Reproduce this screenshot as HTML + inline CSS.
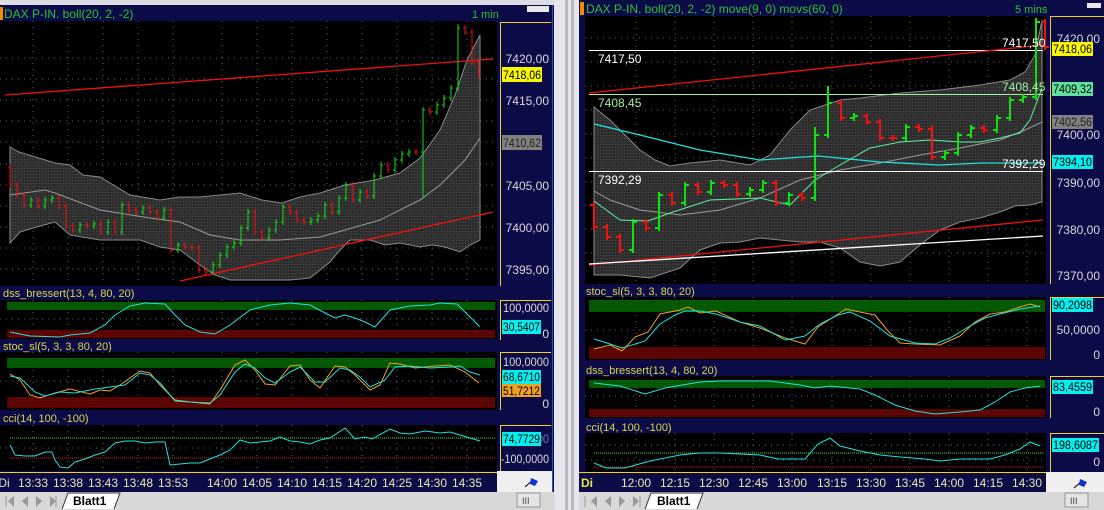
<!DOCTYPE html>
<html><head><meta charset="utf-8"><style>
html,body{margin:0;padding:0;background:#d4d0c8;width:1104px;height:510px;overflow:hidden}
svg{display:block}
text{font-family:"Liberation Sans",sans-serif}
</style></head><body>
<svg id="s" width="1104" height="510" viewBox="0 0 1104 510" xmlns="http://www.w3.org/2000/svg">
<defs>
<pattern id="dots" width="3" height="3" patternUnits="userSpaceOnUse"><rect width="3" height="3" fill="#2e2e2e"/><rect width="1" height="1" fill="#4a4a4a"/></pattern>
<pattern id="gb" width="2" height="2" patternUnits="userSpaceOnUse"><rect width="2" height="2" fill="#005400"/><rect width="1" height="1" fill="#0a6a0a"/></pattern>
<pattern id="rb" width="2" height="2" patternUnits="userSpaceOnUse"><rect width="2" height="2" fill="#560000"/><rect width="1" height="1" fill="#6a1010"/></pattern>
</defs>
<rect x="0" y="0" width="1104" height="510" fill="#e8e8ec"/>
<rect x="0" y="0" width="555" height="5" fill="#dcdce4"/>
<!-- LEFT PANEL -->
<rect x="0" y="5" width="554" height="487" fill="#0b0b48"/>
<rect x="0" y="21" width="497" height="265" fill="#000"/>
<rect x="0" y="300" width="497" height="39" fill="#000"/>
<rect x="0" y="352" width="497" height="58" fill="#000"/>
<rect x="0" y="425" width="497" height="46" fill="#000"/>
<rect x="0" y="7" width="3" height="13" fill="#f08c00"/>
<text x="4" y="18" font-size="12" fill="#30c030">DAX P-IN. boll(20, 2, -2)</text>
<text x="472" y="18" font-size="11" fill="#30c030">1 min</text>
<rect x="527" y="6" width="22" height="6" fill="#e8e8e8"/>
<path d="M500.5 286V22.5H551" stroke="#f0d020" fill="none"/>
<path d="M500.5 340V300.5H551" stroke="#f0d020" fill="none"/>
<path d="M500.5 410V352.5H551" stroke="#f0d020" fill="none"/>
<path d="M500.5 471V425.5H551" stroke="#f0d020" fill="none"/>
<path d="M552.5 5V492" stroke="#3050c0"/>
<g stroke="#666" stroke-dasharray="1,5">
<path d="M33 21V285M68 21V285M103 21V285M138 21V285M173 21V285M222 21V285M257 21V285M292 21V285M327 21V285M362 21V285M397 21V285M432 21V285M467 21V285"/>
<path d="M0 58H497M0 100H497M0 142H497M0 185H497M0 227H497M0 269H497M0 79H497M0 121H497M0 164H497M0 206H497M0 248H497"/>
<path d="M33 300V338M68 300V338M103 300V338M138 300V338M173 300V338M222 300V338M257 300V338M292 300V338M327 300V338M362 300V338M397 300V338M432 300V338M467 300V338M0 319H497"/>
<path d="M33 352V410M68 352V410M103 352V410M138 352V410M173 352V410M222 352V410M257 352V410M292 352V410M327 352V410M362 352V410M397 352V410M432 352V410M467 352V410M0 381H497"/>
<path d="M33 425V470M68 425V470M103 425V470M138 425V470M173 425V470M222 425V470M257 425V470M292 425V470M327 425V470M362 425V470M397 425V470M432 425V470M467 425V470M0 448H497"/>
</g>
<polygon fill="url(#dots)" stroke="#888" stroke-width="1" points="10,147 19,152 55,163 70,165 83,175 100,177 130,195 160,200 180,197 200,197 240,193 262,200 282,203 300,197 320,193 345,185 375,180 400,173 420,158 440,130 455,95 467,60 480,35 480,240 470,245 460,252 445,247 432,245 420,247 400,243 385,245 370,240 350,240 340,250 330,262 310,278 290,280 260,280 230,280 215,275 200,265 180,250 160,247 140,240 100,240 70,235 55,222 40,226 20,232 10,243"/>
<polyline fill="none" stroke="#999" points="10,195 45,190 55,193 100,210 150,218 180,222 210,235 240,240 280,240 320,237 345,230 380,220 420,200 440,185 465,160 480,138"/>
<path d="M5 95L493 59M180 281L493 212" stroke="#f01010" stroke-width="1.3"/>
<g id="lbars"></g>
<g font-size="12" fill="#d8d8d8" text-anchor="end">
<text x="549" y="63">7420,00</text><text x="549" y="105">7415,00</text><text x="549" y="190">7405,00</text><text x="549" y="232">7400,00</text><text x="549" y="274">7395,00</text>
</g>
<rect x="502" y="67" width="40" height="15" fill="#f8f800"/><text x="503" y="79" font-size="12" fill="#000" textLength="38" lengthAdjust="spacingAndGlyphs">7418,06</text>
<rect x="502" y="135" width="40" height="15" fill="#808080"/><text x="503" y="147" font-size="12" fill="#202020" textLength="38" lengthAdjust="spacingAndGlyphs">7410,62</text>
<!-- left dss -->
<text x="3" y="297" font-size="11" fill="#d8d848">dss_bressert(13, 4, 80, 20)</text>
<rect x="7" y="302" width="488" height="8" fill="url(#gb)"/>
<rect x="7" y="330" width="488" height="8" fill="url(#rb)"/>
<polyline fill="none" stroke="#20e0e0" points="10,332 30,336 60,337 70,335 90,333 105,325 115,315 130,306 145,303 165,304 175,315 185,325 200,332 215,334 230,325 250,310 270,305 290,303 310,305 325,313 335,318 345,315 355,318 365,322 375,327 390,310 410,306 430,305 440,303 457,304 470,317 480,327"/>
<text x="549" y="312" font-size="12" fill="#d8d8d8" text-anchor="end" textLength="46" lengthAdjust="spacingAndGlyphs">100,0000</text>
<text x="549" y="338" font-size="12" fill="#d8d8d8" text-anchor="end">0</text>
<rect x="502" y="320" width="39" height="14" fill="#00f0f0"/><text x="503" y="331" font-size="12" fill="#000" textLength="37" lengthAdjust="spacingAndGlyphs">30,5407</text>
<!-- left stoc -->
<text x="3" y="350" font-size="11" fill="#d8d848">stoc_sl(5, 3, 3, 80, 20)</text>
<rect x="7" y="358" width="488" height="10" fill="url(#gb)"/>
<rect x="7" y="397" width="488" height="11" fill="url(#rb)"/>
<polyline fill="none" stroke="#f0a020" points="10,374 20,380 30,395 40,398 55,393 70,389 90,394 100,390 110,391 120,385 140,371 150,373 160,385 175,400 190,402 210,404 220,390 235,365 245,360 255,370 265,384 275,385 290,366 300,365 310,380 320,388 335,366 345,367 355,375 370,390 380,385 390,363 400,364 415,368 435,366 450,365 465,372 479,383"/>
<polyline fill="none" stroke="#20e0e0" points="10,376 20,378 35,392 45,396 60,392 75,393 95,389 110,387 125,385 140,373 150,375 160,383 175,401 190,402 210,403 220,395 235,372 245,364 255,368 265,378 275,383 290,372 300,367 315,382 325,382 340,368 350,370 360,377 370,387 385,380 395,367 410,366 430,368 450,367 460,366 470,372 480,375"/>
<text x="549" y="366" font-size="12" fill="#d8d8d8" text-anchor="end" textLength="46" lengthAdjust="spacingAndGlyphs">100,0000</text>
<text x="549" y="408" font-size="12" fill="#d8d8d8" text-anchor="end">0</text>
<rect x="502" y="384" width="39" height="13" fill="#f0a020"/><text x="503" y="395" font-size="12" fill="#000" textLength="37" lengthAdjust="spacingAndGlyphs">51,7212</text>
<rect x="502" y="370" width="39" height="14" fill="#00f0f0"/><text x="503" y="381" font-size="12" fill="#000" textLength="37" lengthAdjust="spacingAndGlyphs">68,6710</text>
<!-- left cci -->
<text x="3" y="422" font-size="11" fill="#d8d848">cci(14, 100, -100)</text>
<path d="M10 438H495" stroke="#40e040" stroke-dasharray="1,1"/>
<path d="M10 458H495" stroke="#e02020" stroke-dasharray="1,1"/>
<polyline fill="none" stroke="#20e0e0" points="10,445 15,455 25,456 35,456 45,452 52,452 55,460 60,467 68,468 75,462 85,459 95,455 105,452 115,443 125,441 135,441 145,443 155,442 165,442 170,465 180,464 190,463 200,463 210,459 220,455 230,450 240,440 250,443 260,442 270,441 280,437 290,441 300,442 310,444 320,440 330,438 345,428 355,439 365,437 372,439 390,429 400,433 410,434 425,431 440,433 450,432 460,435 470,438 480,441"/>
<text x="549" y="443" font-size="12" fill="#d8d8d8" text-anchor="end" opacity="0.5" textLength="46" lengthAdjust="spacingAndGlyphs">100,0000</text>
<rect x="502" y="432" width="39" height="14" fill="#00f0f0"/><text x="503" y="443" font-size="12" fill="#000" textLength="37" lengthAdjust="spacingAndGlyphs">74,7729</text>
<text x="549" y="463" font-size="12" fill="#d8d8d8" text-anchor="end" textLength="48" lengthAdjust="spacingAndGlyphs">-100,0000</text>
<!-- left time axis -->
<rect x="0" y="472" width="497" height="20" fill="#0b0b48"/>
<path d="M0 472.5H497" stroke="#f0d020"/>
<g font-size="12" fill="#e8e8b0" text-anchor="middle">
<text x="4" y="487">Di</text><text x="33" y="487">13:33</text><text x="68" y="487">13:38</text><text x="103" y="487">13:43</text><text x="138" y="487">13:48</text><text x="173" y="487">13:53</text><text x="222" y="487">14:00</text><text x="257" y="487">14:05</text><text x="292" y="487">14:10</text><text x="327" y="487">14:15</text><text x="362" y="487">14:20</text><text x="397" y="487">14:25</text><text x="432" y="487">14:30</text><text x="467" y="487">14:35</text>
</g>
<rect x="497" y="471" width="55" height="21" fill="#f0f0f0"/>
<path d="M525 487L533 480" stroke="#000"/><path d="M531 478L538 481L535 486L530 484Z" fill="#1030d0"/>
<rect x="0" y="492" width="555" height="18" fill="#d8d8d8"/>
<g fill="#999"><path d="M8 501L14 496V507Z M22 501L28 496V507Z M36 496V507L42 501Z M50 496V507L56 501Z"/></g>
<path d="M6 496V507M56 496V507" stroke="#999"/>
<path d="M62 509L68 493H120L114 509" fill="#fff" stroke="#333"/>
<text x="73" y="505" font-size="12" font-weight="bold" fill="#000">Blatt1</text>
<rect x="517" y="493" width="23" height="14" fill="#e4e4e4" stroke="#999"/>
<text x="522" y="504" font-size="9" fill="#444">III</text>
<!-- divider -->
<rect x="555" y="0" width="24" height="510" fill="#e6e6ec"/>
<rect x="565" y="0" width="3" height="510" fill="#b8b8c0"/>
<rect x="571" y="0" width="3" height="510" fill="#b8b8c0"/>
<!-- RIGHT PANEL -->
<rect x="579" y="0" width="525" height="492" fill="#0b0b48"/>
<rect x="585" y="16" width="461" height="268" fill="#000"/>
<rect x="585" y="297" width="461" height="63" fill="#000"/>
<rect x="585" y="376" width="461" height="42" fill="#000"/>
<rect x="585" y="433" width="461" height="39" fill="#000"/>
<rect x="580" y="2" width="4" height="13" fill="#f08c00"/>
<text x="586" y="13" font-size="12" fill="#30c030">DAX P-IN. boll(20, 2, -2) move(9, 0) movs(60, 0)</text>
<text x="1015" y="13" font-size="11" fill="#30c030">5 mins</text>
<rect x="1087" y="3" width="14" height="5" fill="#e8e8e8"/>
<path d="M1050.5 284V16.5H1104" stroke="#f0d020" fill="none"/>
<path d="M1050.5 360V297.5H1104" stroke="#f0d020" fill="none"/>
<path d="M1050.5 418V376.5H1104" stroke="#f0d020" fill="none"/>
<path d="M1050.5 472V433.5H1104" stroke="#f0d020" fill="none"/>
<g stroke="#666" stroke-dasharray="1,5">
<path d="M636 16V284M675 16V284M714 16V284M753 16V284M792 16V284M832 16V284M871 16V284M910 16V284M949 16V284M988 16V284M1027 16V284"/>
<path d="M585 38H1046M585 86H1046M585 134H1046M585 182H1046M585 229H1046M585 62H1046M585 110H1046M585 158H1046M585 205H1046M585 253H1046"/>
<path d="M636 297V360M675 297V360M714 297V360M753 297V360M792 297V360M832 297V360M871 297V360M910 297V360M949 297V360M988 297V360M1027 297V360M585 330H1046"/>
<path d="M636 376V418M675 376V418M714 376V418M753 376V418M792 376V418M832 376V418M871 376V418M910 376V418M949 376V418M988 376V418M1027 376V418M585 396H1046"/>
<path d="M636 433V472M675 433V472M714 433V472M753 433V472M792 433V472M832 433V472M871 433V472M910 433V472M949 433V472M988 433V472M1027 433V472M585 445H1046M585 460H1046"/>
</g>
<polygon fill="url(#dots)" stroke="#888" points="594,107 610,120 640,150 655,160 670,166 690,163 720,160 750,165 770,155 790,130 810,110 840,100 860,98 900,93 940,90 980,85 1010,80 1025,72 1035,55 1042,20 1042,202 1030,205 1015,206 1000,212 980,218 960,222 940,230 920,245 900,262 880,266 860,262 840,248 820,242 800,242 780,240 760,238 740,242 720,243 700,250 680,268 650,278 620,275 594,275"/>
<polyline fill="none" stroke="#999" points="594,191 610,200 640,210 680,215 720,210 760,198 800,180 840,170 880,163 920,155 960,148 1000,140 1025,130 1042,122"/>
<polyline fill="none" stroke="#20e0e0" stroke-width="1.3" points="594,124 640,135 700,150 760,160 818,156 880,162 939,165 982,163 1042,163"/>
<polyline fill="none" stroke="#60f0a0" points="594,201 620,220 648,221 670,213 710,200 760,198 790,205 815,180 840,165 870,148 900,142 930,140 960,142 980,142 1000,138 1020,133 1030,120 1042,88"/>
<path d="M589 50.5H1043M589 171.5H1043" stroke="#fff"/>
<path d="M589 94.5H1043" stroke="#a0f0a0"/>
<path d="M589 93L1043 45M589 265L1043 220" stroke="#f01010" stroke-width="1.3"/>
<path d="M589 264L1043 236" stroke="#fff" stroke-width="1.3"/>
<g id="rbars"></g>
<g font-size="12">
<text x="598" y="63" fill="#fff">7417,50</text><text x="598" y="107" fill="#a0f0a0">7408,45</text><text x="598" y="184" fill="#fff">7392,29</text>
<text x="1002" y="47" fill="#fff">7417,50</text><text x="1002" y="91" fill="#a0f0a0">7408,45</text><text x="1002" y="168" fill="#fff">7392,29</text>
</g>
<g font-size="12" fill="#d8d8d8" text-anchor="end">
<text x="1100" y="43">7420,00</text><text x="1100" y="139">7400,00</text><text x="1100" y="187">7390,00</text><text x="1100" y="234">7380,00</text><text x="1100" y="280">7370,00</text>
</g>
<rect x="1052" y="42" width="41" height="14" fill="#f8f800"/><text x="1053" y="53" font-size="12" fill="#000" textLength="39" lengthAdjust="spacingAndGlyphs">7418,06</text>
<rect x="1052" y="82" width="41" height="14" fill="#60e0a0"/><text x="1053" y="93" font-size="12" fill="#000" textLength="39" lengthAdjust="spacingAndGlyphs">7409,32</text>
<rect x="1052" y="115" width="41" height="14" fill="#808080"/><text x="1053" y="126" font-size="12" fill="#202020" textLength="39" lengthAdjust="spacingAndGlyphs">7402,56</text>
<rect x="1052" y="155" width="41" height="14" fill="#00f0f0"/><text x="1053" y="166" font-size="12" fill="#000" textLength="39" lengthAdjust="spacingAndGlyphs">7394,10</text>
<!-- right stoc -->
<text x="586" y="295" font-size="11" fill="#d8d848">stoc_sl(5, 3, 3, 80, 20)</text>
<rect x="589" y="300" width="456" height="12" fill="url(#gb)"/>
<rect x="589" y="347" width="456" height="12" fill="url(#rb)"/>
<polyline fill="none" stroke="#f0a020" points="594,349 610,345 622,351 635,337 648,332 660,314 680,310 688,307 700,313 716,311 740,322 760,328 785,338 805,344 818,327 835,316 846,309 860,312 875,315 888,331 900,343 915,344 940,345 960,336 975,322 990,314 1005,312 1020,307 1030,304 1040,307"/>
<polyline fill="none" stroke="#20e0e0" points="594,339 610,344 622,348 645,341 660,324 675,315 685,311 700,311 716,314 740,322 760,326 785,340 805,336 820,324 838,315 850,312 870,321 890,336 915,343 935,344 950,338 970,326 985,318 1000,314 1020,309 1040,306"/>
<text x="1100" y="334" font-size="12" fill="#d8d8d8" text-anchor="end">50,0000</text>
<text x="1100" y="359" font-size="12" fill="#d8d8d8" text-anchor="end">0</text>
<rect x="1052" y="298" width="41" height="14" fill="#00f0f0"/><text x="1053" y="309" font-size="12" fill="#000" textLength="39" lengthAdjust="spacingAndGlyphs">90,2098</text>
<!-- right dss -->
<text x="586" y="374" font-size="11" fill="#d8d848">dss_bressert(13, 4, 80, 20)</text>
<rect x="589" y="380" width="456" height="8" fill="url(#gb)"/>
<rect x="589" y="409" width="456" height="8" fill="url(#rb)"/>
<polyline fill="none" stroke="#20e0e0" points="594,383 620,386 645,394 665,388 700,382 720,381 770,381 800,385 815,388 830,386 860,389 875,395 895,405 915,411 935,414 960,412 980,410 995,402 1010,392 1025,388 1040,386"/>
<text x="1100" y="416" font-size="12" fill="#d8d8d8" text-anchor="end">0</text>
<rect x="1052" y="380" width="41" height="14" fill="#00f0f0"/><text x="1053" y="391" font-size="12" fill="#000" textLength="39" lengthAdjust="spacingAndGlyphs">83,4559</text>
<!-- right cci -->
<text x="586" y="431" font-size="11" fill="#d8d848">cci(14, 100, -100)</text>
<path d="M594 453H1043" stroke="#40e040" stroke-dasharray="1,1"/>
<path d="M594 467H1043" stroke="#e02020" stroke-dasharray="1,1"/>
<polyline fill="none" stroke="#20e0e0" points="594,463 606,468 625,468 650,461 680,455 700,453 720,453 760,455 778,459 805,459 818,444 830,438 840,446 860,451 880,455 900,457 925,459 940,461 960,459 990,459 1005,455 1020,449 1030,442 1040,446"/>
<text x="1100" y="466" font-size="12" fill="#d8d8d8" text-anchor="end">0</text>
<rect x="1052" y="438" width="47" height="14" fill="#00f0f0"/><text x="1053" y="449" font-size="12" fill="#000" textLength="45" lengthAdjust="spacingAndGlyphs">198,6087</text>
<!-- right time axis -->
<rect x="579" y="472" width="467" height="20" fill="#0b0b48"/>
<path d="M579 472.5H1046" stroke="#f0d020"/>
<text x="581" y="487" font-size="12" font-weight="bold" fill="#e8e840">Di</text>
<g font-size="12" fill="#e8e8b0" text-anchor="middle">
<text x="636" y="487">12:00</text><text x="675" y="487">12:15</text><text x="714" y="487">12:30</text><text x="753" y="487">12:45</text><text x="792" y="487">13:00</text><text x="832" y="487">13:15</text><text x="871" y="487">13:30</text><text x="910" y="487">13:45</text><text x="949" y="487">14:00</text><text x="988" y="487">14:15</text><text x="1027" y="487">14:30</text>
</g>
<rect x="1046" y="472" width="58" height="20" fill="#f0f0f0"/>
<path d="M1074 488L1082 481" stroke="#000"/><path d="M1080 479L1087 482L1084 487L1079 485Z" fill="#1030d0"/>
<rect x="579" y="492" width="525" height="18" fill="#d8d8d8"/>
<g fill="#999"><path d="M591 501L597 496V507Z M605 501L611 496V507Z M619 496V507L625 501Z M633 496V507L639 501Z"/></g>
<path d="M585 496V507M640 496V507" stroke="#999"/>
<path d="M645 509L651 493H703L697 509" fill="#fff" stroke="#333"/>
<text x="657" y="505" font-size="12" font-weight="bold" fill="#000">Blatt1</text>
<rect x="1065" y="493" width="23" height="14" fill="#e4e4e4" stroke="#999"/>
<text x="1070" y="504" font-size="9" fill="#444">III</text>
</svg>
<script>
function bars(id,data,first,w,tk){
 var g=document.getElementById(id),o=first,gp="",rp="";
 data.forEach(function(d){var x=d[0],c=d[1],lo=Math.max(o,c)+(d[3]||3),hi=Math.min(o,c)-(d[2]||3);
  var p="M"+x+" "+hi+"V"+lo+"M"+(x-tk)+" "+o+"H"+x+"M"+x+" "+c+"H"+(x+tk);
  if(c<o)gp+=p;else rp+=p;o=c;});
 g.innerHTML='<path d="'+gp+'" stroke="#10e010" stroke-width="'+w+'" fill="none"/><path d="'+rp+'" stroke="#f01010" stroke-width="'+w+'" fill="none"/>';
}
bars("lbars",[[10,185],[17,195],[24,205],[31,200],[38,206],[45,200],[52,198],[59,206],[66,226],[73,230],[80,225],[87,226],[94,224],[101,232],[108,222],[115,232],[122,205],[129,210],[136,212],[143,208],[150,212],[157,218],[164,210],[171,250],[178,245],[185,247],[192,248],[199,270],[206,272],[213,265],[220,255],[227,247],[234,243],[241,228],[248,212],[255,232],[262,238],[269,230],[276,222],[283,207],[290,212],[297,220],[304,222],[311,220],[318,216],[325,205],[332,212],[339,198],[346,185],[353,200],[360,192],[367,196],[374,176],[381,165],[388,170],[395,160],[402,154],[409,152],[416,152],[423,110,3,45],[430,112],[437,105],[444,98],[451,88],[458,28,4,3],[465,32],[472,62],[479,75]],167,1,2);
bars("rbars",[[594,227],[607,237],[620,250],[633,222],[646,228],[659,195],[672,203],[685,185],[698,192],[711,183],[724,185],[737,194],[750,190],[763,183],[776,203],[789,195],[802,198],[815,135,8],[828,103,17],[841,118],[854,116],[867,122],[880,138],[893,138],[906,127],[919,129],[932,157],[945,153],[958,135],[971,128],[984,130],[997,118],[1010,100],[1023,97],[1036,22,4],[1045,47]],205,2,4);
</script>
</body></html>
